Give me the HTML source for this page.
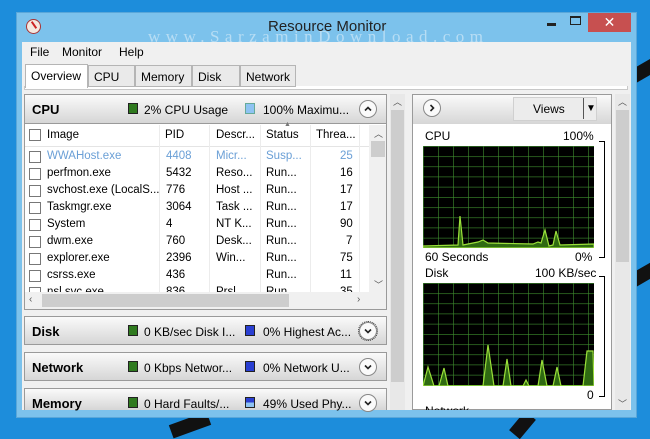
<!DOCTYPE html>
<html><head><meta charset="utf-8"><style>
*{box-sizing:border-box;margin:0;padding:0}
body{width:650px;height:430px;overflow:hidden;background:#1d8ddb;font-family:"Liberation Sans","DejaVu Sans",sans-serif;font-size:11.5px;color:#000;position:relative}
.a{position:absolute}
.win{left:16px;top:12px;width:621px;height:406px;background:#7cc2ec;border:1px solid #5aa7d9}
.client{left:22px;top:42px;width:609px;height:368px;background:#f0f0f0}
.tab{position:absolute;top:65px;height:22px;border:1px solid #b5b5b5;background:#eaeaea;padding:4px 5px;font-size:12px}
.hdr{position:absolute;left:24px;width:363px;background:linear-gradient(#fafafa,#d6d6d6);border:1px solid #9a9a9a;font-size:12px}
.hdr b{position:absolute;left:7px;font-size:13px}
.sw{position:absolute;width:10px;height:11px;border:1px solid #222}
.g{background:#2f7a1f}.bl{background:#2a3fd2}.lb{background:#8ec3f2}
.chev{position:absolute;width:18px;height:18px;border:1px solid #888;border-radius:50%;background:#fafafa}
.chev svg{position:absolute;left:3px;top:3px}
.row{position:absolute;left:25px;width:340px;height:17px}
.row span{position:absolute;top:2px}
.cb{position:absolute;left:4px;top:3px;width:12px;height:12px;border:1px solid #777;background:#fff}
.blk{position:absolute;background:#111}
</style></head><body>
<div class="blk" style="left:630px;top:60px;width:40px;height:14px;transform:rotate(-30deg)"></div>
<div class="blk" style="left:628px;top:265px;width:40px;height:14px;transform:rotate(-30deg)"></div>
<div class="blk" style="left:170px;top:418px;width:40px;height:14px;transform:rotate(-20deg)"></div>
<div class="blk" style="left:510px;top:418px;width:25px;height:14px;transform:rotate(-50deg)"></div>
<div class="a win"></div>
<div class="a" style="left:26px;top:19px;width:15px;height:15px;border-radius:50%;background:#f4e8e0;border:1px solid #a33"></div>
<div class="a" style="left:33px;top:21px;width:2px;height:8px;background:#c22;transform:rotate(-35deg)"></div>
<div class="a" style="left:268px;top:18px;font-size:15px;color:#222">Resource Monitor</div>
<div class="a" style="left:148px;top:27px;font-family:'Liberation Serif',serif;font-size:17px;letter-spacing:5.5px;color:rgba(255,255,255,.45)">www.SarzaminDownload.com</div>
<div class="a" style="left:547px;top:23px;width:9px;height:3px;background:#222"></div>
<div class="a" style="left:570px;top:16px;width:11px;height:9px;border:1px solid #222;border-top-width:2px"></div>
<div class="a" style="left:588px;top:13px;width:43px;height:19px;background:#c75050;color:#fff;font-size:14px;text-align:center;line-height:18px">✕</div>
<div class="a client"></div>
<div class="a" style="left:30px;top:45px;font-size:12px">File</div>
<div class="a" style="left:62px;top:45px;font-size:12px">Monitor</div>
<div class="a" style="left:119px;top:45px;font-size:12px">Help</div>
<div class="a" style="left:24px;top:86px;width:604px;height:4px;border:1px solid #c8c8c8;border-top:none;background:#fff"></div>
<div class="tab" style="left:25px;width:63px;background:#fff;border-bottom:none;top:64px;height:24px">Overview</div>
<div class="tab" style="left:88px;width:47px">CPU</div>
<div class="tab" style="left:135px;width:57px">Memory</div>
<div class="tab" style="left:192px;width:48px">Disk</div>
<div class="tab" style="left:240px;width:56px">Network</div>
<!-- left panel -->
<div class="a" style="left:24px;top:94px;width:363px;height:216px;background:#fff;border:1px solid #9a9a9a"></div>
<div class="hdr" style="top:94px;height:30px"><b style="top:7px">CPU</b>
<div class="sw g" style="left:103px;top:8px"></div><span class="a" style="left:119px;top:8px">2% CPU Usage</span>
<div class="sw lb" style="left:220px;top:8px;border-color:#6a9"></div><span class="a" style="left:238px;top:8px">100% Maximu...</span>
<div class="chev" style="left:334px;top:5px"><svg width="10" height="10"><path d="M2 6.5L5 3.5L8 6.5" stroke="#222" stroke-width="1.6" fill="none"/></svg></div></div>
<div class="a" style="left:25px;top:125px;width:344px;height:22px;background:#fff;border-bottom:1px solid #e4e4e4"></div>
<div class="cb" style="left:29px;top:129px"></div>
<span class="a" style="left:47px;top:129px">Image</span>
<span class="a" style="left:165px;top:129px">PID</span>
<span class="a" style="left:216px;top:129px">Descr...</span>
<span class="a" style="left:266px;top:129px">Status</span>
<span class="a" style="left:284px;top:121px;font-size:7px;color:#777">▲</span>
<span class="a" style="left:316px;top:129px">Threa...</span>
<div class="a" style="left:159px;top:125px;width:1px;height:168px;background:#ececec"></div>
<div class="a" style="left:209px;top:125px;width:1px;height:168px;background:#ececec"></div>
<div class="a" style="left:260px;top:125px;width:1px;height:168px;background:#ececec"></div>
<div class="a" style="left:310px;top:125px;width:1px;height:168px;background:#ececec"></div>
<div class="a" style="left:359px;top:125px;width:1px;height:168px;background:#ececec"></div>
<div style="position:absolute;left:0;top:0;color:#000">
<div class="row" style="top:148px;color:#6a9fd6"><div class="cb"></div><span style="left:22px">WWAHost.exe</span><span style="left:141px">4408</span><span style="left:191px">Micr...</span><span style="left:241px">Susp...</span><span style="left:315px">25</span></div>
<div class="row" style="top:165px"><div class="cb"></div><span style="left:22px">perfmon.exe</span><span style="left:141px">5432</span><span style="left:191px">Reso...</span><span style="left:241px">Run...</span><span style="left:315px">16</span></div>
<div class="row" style="top:182px"><div class="cb"></div><span style="left:22px">svchost.exe (LocalS...</span><span style="left:141px">776</span><span style="left:191px">Host ...</span><span style="left:241px">Run...</span><span style="left:315px">17</span></div>
<div class="row" style="top:199px"><div class="cb"></div><span style="left:22px">Taskmgr.exe</span><span style="left:141px">3064</span><span style="left:191px">Task ...</span><span style="left:241px">Run...</span><span style="left:315px">17</span></div>
<div class="row" style="top:216px"><div class="cb"></div><span style="left:22px">System</span><span style="left:141px">4</span><span style="left:191px">NT K...</span><span style="left:241px">Run...</span><span style="left:315px">90</span></div>
<div class="row" style="top:233px"><div class="cb"></div><span style="left:22px">dwm.exe</span><span style="left:141px">760</span><span style="left:191px">Desk...</span><span style="left:241px">Run...</span><span style="left:321px">7</span></div>
<div class="row" style="top:250px"><div class="cb"></div><span style="left:22px">explorer.exe</span><span style="left:141px">2396</span><span style="left:191px">Win...</span><span style="left:241px">Run...</span><span style="left:315px">75</span></div>
<div class="row" style="top:267px"><div class="cb"></div><span style="left:22px">csrss.exe</span><span style="left:141px">436</span><span style="left:241px">Run...</span><span style="left:315px">11</span></div>
<div class="row" style="top:284px"><div class="cb"></div><span style="left:22px">nsl.svc.exe</span><span style="left:141px">836</span><span style="left:191px">Prsl...</span><span style="left:241px">Run...</span><span style="left:315px">35</span></div>
</div>
<div class="a" style="left:369px;top:125px;width:17px;height:168px;background:#f0f0f0"></div>
<div class="a" style="left:371px;top:141px;width:14px;height:16px;background:#cdcdcd"></div>
<span class="a" style="left:374px;top:127px;font-size:9px;color:#555">︿</span>
<span class="a" style="left:374px;top:278px;font-size:9px;color:#555">﹀</span>
<div class="a" style="left:25px;top:292px;width:361px;height:17px;background:#f0f0f0"></div>
<div class="a" style="left:42px;top:294px;width:247px;height:13px;background:#cdcdcd"></div>
<span class="a" style="left:29px;top:294px;font-size:10px;color:#555">‹</span>
<span class="a" style="left:357px;top:294px;font-size:10px;color:#555">›</span>
<div class="hdr" style="top:316px;height:29px"><b style="top:7px">Disk</b>
<div class="sw g" style="left:103px;top:8px"></div><span class="a" style="left:119px;top:8px">0 KB/sec Disk I...</span>
<div class="sw bl" style="left:220px;top:8px"></div><span class="a" style="left:238px;top:8px">0% Highest Ac...</span>
<div class="chev" style="left:334px;top:5px;outline:1px dotted #333"><svg width="10" height="10"><path d="M2 3.5L5 6.5L8 3.5" stroke="#222" stroke-width="1.6" fill="none"/></svg></div></div>
<div class="hdr" style="top:352px;height:29px"><b style="top:7px">Network</b>
<div class="sw g" style="left:103px;top:8px"></div><span class="a" style="left:119px;top:8px">0 Kbps Networ...</span>
<div class="sw bl" style="left:220px;top:8px"></div><span class="a" style="left:238px;top:8px">0% Network U...</span>
<div class="chev" style="left:334px;top:5px"><svg width="10" height="10"><path d="M2 3.5L5 6.5L8 3.5" stroke="#222" stroke-width="1.6" fill="none"/></svg></div></div>
<div class="hdr" style="top:388px;height:22px;border-bottom:none"><b style="top:7px">Memory</b>
<div class="sw g" style="left:103px;top:8px"></div><span class="a" style="left:119px;top:8px">0 Hard Faults/...</span>
<div class="sw" style="left:220px;top:8px;background:linear-gradient(#2a3fd2 50%,#8ec3f2 50%)"></div><span class="a" style="left:238px;top:8px">49% Used Phy...</span>
<div class="chev" style="left:334px;top:5px"><svg width="10" height="10"><path d="M2 3.5L5 6.5L8 3.5" stroke="#222" stroke-width="1.6" fill="none"/></svg></div></div>
<!-- left scrollbar -->
<div class="a" style="left:390px;top:94px;width:15px;height:316px;background:#e8e8e8"></div>
<div class="a" style="left:391px;top:110px;width:13px;height:272px;background:#cdcdcd"></div>
<span class="a" style="left:393px;top:95px;font-size:9px;color:#555">︿</span>
<!-- right panel -->
<div class="a" style="left:412px;top:94px;width:200px;height:316px;background:#fff;border:1px solid #9a9a9a"></div>
<div class="a" style="left:413px;top:95px;width:198px;height:29px;background:linear-gradient(#fafafa,#d6d6d6)"></div>
<div class="chev" style="left:423px;top:99px"><svg width="10" height="10"><path d="M3.5 2L6.5 5L3.5 8" stroke="#222" stroke-width="1.6" fill="none"/></svg></div>
<div class="a" style="left:513px;top:97px;width:84px;height:24px;background:#ececec;border:1px solid #d0d0d0;font-size:12px;padding:4px 0 0 19px">Views</div>
<div class="a" style="left:583px;top:98px;width:1px;height:21px;background:#555"></div>
<span class="a" style="left:586px;top:103px;font-size:10px">▼</span>
<span class="a" style="left:425px;top:129px;font-size:12px">CPU</span>
<span class="a" style="left:563px;top:129px;font-size:12px">100%</span>
<svg class="a" style="left:423px;top:146px" width="171" height="102" viewBox="0 0 171 102">
<defs><pattern id="p" width="15" height="10.2" patternUnits="userSpaceOnUse"><path d="M0 0V10.2M0 0H15" stroke="#3f8f2f" stroke-width="1.2" fill="none"/></pattern></defs>
<rect width="171" height="102" fill="#000"/><rect width="171" height="102" fill="url(#p)"/>
<path d="M0 100L35 99L37 70L40 99L55 96L60 94L65 97L110 98L115 96L118 97L122 84L126 100L130 99L133 85L137 99L171 98V102H0Z" fill="#2f6a12" stroke="#9be03a" stroke-width="1.2"/>
</svg>
<div class="a" style="left:599px;top:141px;width:6px;height:117px;border:1px solid #000;border-left:none"></div>
<span class="a" style="left:425px;top:250px;font-size:12px">60 Seconds</span>
<span class="a" style="left:575px;top:250px;font-size:12px">0%</span>
<span class="a" style="left:425px;top:266px;font-size:12px">Disk</span>
<span class="a" style="left:535px;top:266px;font-size:12px">100 KB/sec</span>
<svg class="a" style="left:423px;top:283px" width="171" height="103" viewBox="0 0 171 103">
<rect width="171" height="103" fill="#000"/><rect width="171" height="103" fill="url(#p)"/>
<path d="M0 103L5 84L11 103L16 103L21 85L25 103L60 103L65 62L71 103L80 103L84 76L88 103L100 103L103 97L106 103L115 103L119 77L124 103L130 103L134 84L138 103L160 103L164 68L170 68L171 103Z" fill="#2f6a12" stroke="#9be03a" stroke-width="1.2"/>
</svg>
<div class="a" style="left:599px;top:276px;width:6px;height:121px;border:1px solid #000;border-left:none"></div>
<span class="a" style="left:587px;top:388px;font-size:12px">0</span>
<span class="a" style="left:425px;top:404px;font-size:12px;height:6px;overflow:hidden">Network</span>
<!-- right scrollbar -->
<div class="a" style="left:615px;top:94px;width:15px;height:316px;background:#e8e8e8"></div>
<div class="a" style="left:616px;top:110px;width:13px;height:152px;background:#cdcdcd"></div>
<span class="a" style="left:618px;top:95px;font-size:9px;color:#555">︿</span>
<span class="a" style="left:618px;top:397px;font-size:9px;color:#555">﹀</span>
</body></html>
